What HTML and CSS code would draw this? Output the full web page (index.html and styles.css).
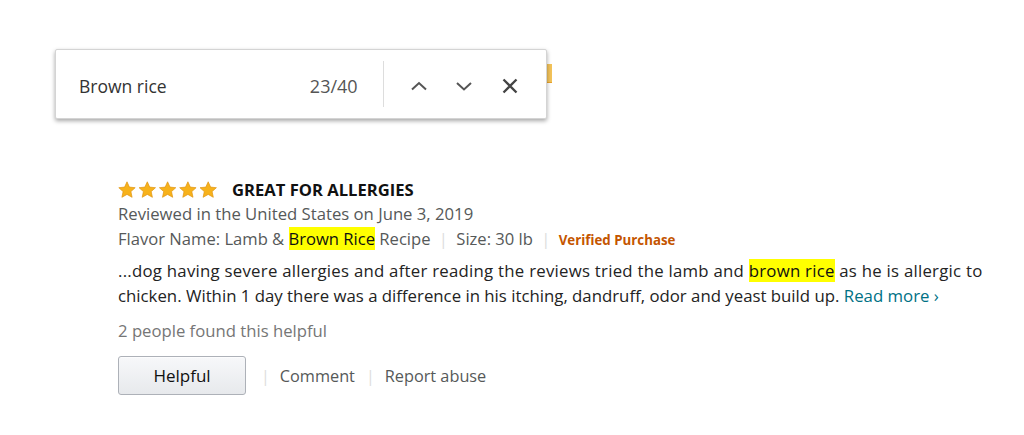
FILE: index.html
```html
<!DOCTYPE html>
<html lang="en">
<head>
    <meta charset="UTF-8">
    <title>Find in page - review</title>
    <link rel="stylesheet" href="styles.css">
</head>
<body>

<!-- page content under the find bar -->
<div class="behind"></div>

<div class="review">
    <div class="review-head">
        <span class="stars">
            <svg width="100" height="17" viewBox="0 0 100 17">
                <defs>
                    <path id="star" d="M9 0.8l2.4 5.3 5.8 0.6-4.3 3.9 1.2 5.7L9 13.4l-5.1 2.9 1.2-5.7L0.8 6.7l5.8-0.6z"/>
                </defs>
                <use href="#star" x="0" fill="#f7b21b" stroke="#df9514" stroke-width="0.7"/>
                <use href="#star" x="20.3" fill="#f7b21b" stroke="#df9514" stroke-width="0.7"/>
                <use href="#star" x="40.6" fill="#f7b21b" stroke="#df9514" stroke-width="0.7"/>
                <use href="#star" x="60.9" fill="#f7b21b" stroke="#df9514" stroke-width="0.7"/>
                <use href="#star" x="81.2" fill="#f7b21b" stroke="#df9514" stroke-width="0.7"/>
            </svg>
        </span>
        <span class="review-title">GREAT FOR ALLERGIES</span>
    </div>
    <div class="review-date">Reviewed in the United States on June 3, 2019</div>
    <div class="review-meta">
        Flavor Name: Lamb &amp; <mark>Brown Rice</mark> Recipe
        <span class="sep">|</span>
        Size: 30 lb
        <span class="sep">|</span>
        <span class="verified">Verified Purchase</span>
    </div>
    <div class="review-body">
        <span class="line-one">...dog having severe allergies and after reading the reviews tried the lamb and <mark>brown rice</mark> as he is allergic to</span><br>
        chicken. Within 1 day there was a difference in his itching, dandruff, odor and yeast build up.
        <a href="#" class="read-more">Read more ›</a>
    </div>
    <div class="helpful-count">2 people found this helpful</div>
    <div class="actions">
        <button class="btn-helpful">Helpful</button>
        <span class="sep">|</span>
        <a href="#" class="action-link">Comment</a>
        <span class="sep">|</span>
        <a href="#" class="action-link">Report abuse</a>
    </div>
</div>

<!-- browser find bar -->
<div class="findbar">
    <span class="find-query">Brown rice</span>
    <span class="find-count">23/40</span>
    <span class="find-divider"></span>
    <span class="find-btn">
        <svg width="18" height="18" viewBox="0 0 18 18"><path d="M2 12.5l7-6.5 7 6.5" fill="none" stroke="#555" stroke-width="2"/></svg>
    </span>
    <span class="find-btn">
        <svg width="18" height="18" viewBox="0 0 18 18"><path d="M2 6l7 6.5 7-6.5" fill="none" stroke="#555" stroke-width="2"/></svg>
    </span>
    <span class="find-btn">
        <svg width="18" height="18" viewBox="0 0 18 18"><path d="M2.5 2.5l13 13M15.5 2.5l-13 13" fill="none" stroke="#444" stroke-width="2.3"/></svg>
    </span>
</div>

</body>
</html>
```

FILE: styles.css
```css
body {
    margin: 0;
    background-color: #fff;
    font-family: "Open Sans", Arial, sans-serif;
    color: #0f1111;
}
.behind {
    position: absolute;
    left: 540px;
    top: 64px;
    width: 12px;
    height: 18px;
    background-color: #f3c35a;
    border-bottom: 1px solid #e7a22c;
}
.findbar {
    position: absolute;
    left: 55px;
    top: 49px;
    width: 492px;
    height: 70px;
    box-sizing: border-box;
    background-color: #fff;
    border: 1px solid #d4d4d4;
    border-radius: 2px;
    box-shadow: 0 2px 4px rgba(0, 0, 0, 0.35);
    display: flex;
    align-items: center;
    padding: 3px 0 0 23px;
}
.find-query {
    font-size: 17.5px;
    color: #333;
    width: 234px;
}
.find-count {
    font-size: 18px;
    color: #555;
    width: 74px;
}
.find-divider {
    width: 1px;
    height: 46px;
    margin-top: -3px;
    background-color: #ddd;
    margin-right: 26px;
}
.find-btn {
    width: 46px;
    display: flex;
    align-items: center;
}
.review {
    padding: 177px 0 0 118px;
}
.review-head {
    display: flex;
    align-items: center;
    height: 24px;
}
.stars {
    display: flex;
    width: 114px;
}
.review-title {
    font-size: 16.6px;
    font-weight: bold;
    color: #111;
}
.review-date {
    font-size: 16.7px;
    line-height: 25px;
    color: #565959;
}
.review-meta {
    font-size: 16.6px;
    line-height: 26px;
    color: #565959;
}
mark {
    background-color: #ffff00;
    color: #0f1111;
}
.sep {
    color: #ddd;
    margin: 0 4px;
}
.verified {
    font-size: 13.3px;
    font-weight: bold;
    color: #c45500;
}
.review-body {
    font-size: 16.8px;
    line-height: 25px;
    color: #232323;
    margin-top: 5px;
}
.line-one {
    letter-spacing: 0.25px;
}
.read-more {
    color: #007185;
    text-decoration: none;
}
.helpful-count {
    font-size: 16.7px;
    line-height: 24px;
    color: #767676;
    margin-top: 11px;
}
.actions {
    display: flex;
    align-items: center;
    margin-top: 13px;
}
.btn-helpful {
    width: 128px;
    height: 39px;
    font-family: inherit;
    font-size: 17px;
    color: #111;
    background: linear-gradient(#f7f8fa, #e7e9ec);
    border: 1px solid #adb1b8;
    border-radius: 3px;
    box-shadow: 0 1px 0 rgba(255, 255, 255, 0.6) inset;
    margin-right: 15px;
}
.actions .sep {
    margin: 0 10px 0 0;
}
.action-link {
    font-size: 16.3px;
    color: #565959;
    text-decoration: none;
    margin-right: 11px;
}
```
